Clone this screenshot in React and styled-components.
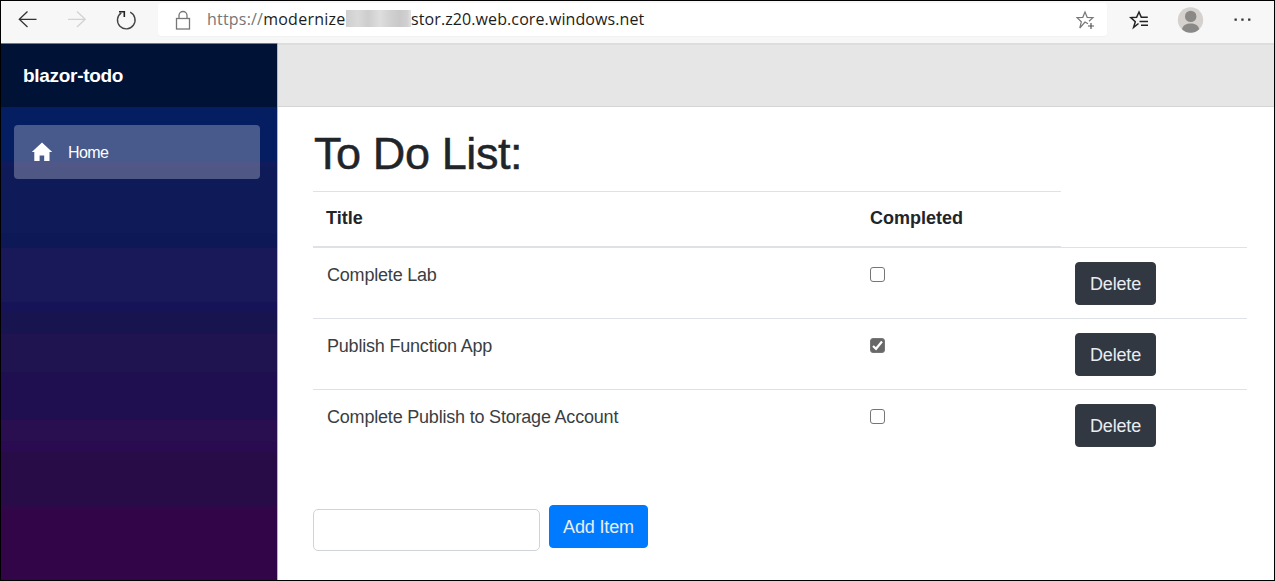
import React from "react";
import styled, { createGlobalStyle } from "styled-components";

const Global = createGlobalStyle`
  * { box-sizing: border-box; }
  body { margin: 0; background: #fff; font-family: "Liberation Sans", Arial, sans-serif; color: #212529; }
  button, input { font-family: inherit; margin: 0; }
`;

const Window = styled.div`
  width: 1275px;
  height: 581px;
  border: 1px solid #000;
  display: flex;
  flex-direction: column;
  overflow: hidden;
`;

const Toolbar = styled.header`
  height: 42px;
  flex: none;
  display: flex;
  align-items: flex-start;
  background: #f7f7f7;
`;

const NavIcons = styled.div`
  width: 157px;
  height: 38px;
  display: flex;
`;

const AddressBar = styled.div`
  width: 949px;
  height: 33px;
  margin-top: 2px;
  padding: 0 12px 0 15px;
  display: flex;
  align-items: center;
  background: #fff;
  border-radius: 3px;
  box-shadow: 0 1px 1px #f0f0f0;
`;

const Url = styled.div`
  display: flex;
  align-items: center;
  flex: 1;
  margin-left: 16px;
  padding-bottom: 1px;
  font: 16px/22px "Open Sans", "Noto Sans", sans-serif;
  white-space: pre;
  color: #1c1c1c;
`;

const Scheme = styled.span`
  color: #767676;
  letter-spacing: 0.2px;
`;

const UrlPart = styled.span`
  letter-spacing: ${(p) => p.$spacing};
`;

const HostStart = styled.span`
  width: 139px;
  flex: none;
`;

const Redacted = styled.span`
  width: 65px;
  height: 17px;
  flex: none;
  margin-top: -1px;
  background: linear-gradient(90deg, #cfcfcf 0%, #d9d9d9 18%, #cdcdcd 34%, #dedede 52%, #d2d2d2 66%, #c9c9c9 82%, #d0d0d0 94%, #e2e2e2 100%);
`;

const Actions = styled.div`
  flex: 1;
  height: 38px;
`;

const Body = styled.div`
  flex: 1;
  display: flex;
`;

const Sidebar = styled.aside`
  width: 277px;
  border-right: 1px solid #b6b4cb;
  background: linear-gradient(
    #051e62 0 119px, #111a5a 119px 124px, #0e1b58 124px 190px, #0d1857 190px 205px,
    #191858 205px 259px, #171358 259px 268px, #171450 268px 291px, #1f1450 291px 329px,
    #200f50 329px 377px, #290e50 377px 398px, #2a0a50 398px 409px, #280c48 409px 462px,
    #2e0848 462px 467px, #310548 467px);
`;

const Brand = styled.div`
  height: 64px;
  padding: 0 0 0 22px;
  display: flex;
  align-items: center;
  background: #001337;
  border-top: 1px solid #6f7890;
  color: #fff;
  font-size: 19px;
  font-weight: 700;
  letter-spacing: -0.3px;
`;

const NavLink = styled.a`
  margin: 18px 17px 0 13px;
  height: 54px;
  padding-left: 17px;
  display: flex;
  align-items: center;
  gap: 15px;
  border-radius: 4px;
  background: rgba(255, 255, 255, 0.27);
  color: #fff;
  font-size: 16px;
  letter-spacing: -0.6px;
`;

const NavText = styled.span`
  padding-top: 2px;
`;

const Main = styled.main`
  flex: 1;
`;

const TopRow = styled.div`
  height: 64px;
  background: #e6e6e6;
  border-top: 2px solid #dddddd;
  border-bottom: 1px solid #d6d5d5;
`;

const Content = styled.div`
  padding: 16px 27px 0 35px;
`;

const Heading = styled.h1`
  margin: 0;
  height: 68px;
  padding: 1px 0 0 1px;
  font-size: 45px;
  line-height: 60px;
  font-weight: 400;
  letter-spacing: -0.4px;
  -webkit-text-stroke: 0.5px #212529;
`;

const Row = styled.div`
  display: grid;
  grid-template-columns: 544px 204px 1fr;
  height: ${(p) => (p.$last ? 70 : 71)}px;
  border-bottom: ${(p) => (p.$last ? "0" : "1px solid #dee2e6")};
`;

const HeadRow = styled(Row)`
  height: 57px;
  border-bottom: 0;
`;

const HeadCell = styled.div`
  border-top: 1px solid #dee2e6;
  border-bottom: 2px solid #dee2e6;
  padding: 14px 13px;
  font-size: 18px;
  line-height: 24px;
  font-weight: 700;
`;

const HeadSpacer = styled.div`
  border-bottom: 1px solid #dee2e6;
`;

const Cell = styled.div`
  padding: 14px 13px 0;
  font-size: 18px;
  line-height: 28px;
  color: #3a3e42;
`;

const ItemTitle = styled(Cell)`
  padding: 13px 13px 0 14px;
  letter-spacing: -0.2px;
`;

const ActionCell = styled(Cell)`
  padding-left: 14px;
`;

const Check = styled.span`
  display: flex;
  margin-top: 5px;
  width: 15px;
  height: 15px;
  border: 1px solid #767676;
  border-radius: 3px;
  background: ${(p) => (p.$on ? "#686868" : "#fff")};
`;

const Button = styled.button`
  height: 43px;
  width: ${(p) => p.$width};
  padding: 1px 0 0;
  display: block;
  border: 1px solid ${(p) => (p.$primary ? "#007bff" : "#343a40")};
  border-radius: 4px;
  background: ${(p) => (p.$primary ? "#007bff" : "#323842")};
  color: #e9edf1;
  font-size: 18px;
  letter-spacing: -0.15px;
  line-height: 27px;
`;

const Form = styled.form`
  display: flex;
  gap: 9px;
  margin-top: 45px;
`;

const Field = styled.input`
  width: 227px;
  height: 42px;
  margin-top: 4px;
  border: 1px solid #ced4da;
  border-radius: 5px;
  background: #fff;
`;

const items = [
  { title: "Complete Lab", done: false },
  { title: "Publish Function App", done: true },
  { title: "Complete Publish to Storage Account", done: false },
];

export default function App() {
  return (
    <Window>
      <Global />
      <Toolbar>
        <NavIcons>
          <svg width="157" height="38" viewBox="1 1 157 38" fill="none" strokeWidth="1.3">
            <path d="M36.5 19.3H19.5M27.5 11.5L19.3 19.3L27.5 27" stroke="#333" />
            <path d="M68 19.3H85M77 11.5L85.2 19.3L77 27" stroke="#d2d2d2" />
            <path d="M130.2 12.2A8.8 8.8 0 1 1 121.3 12.8" stroke="#444" strokeWidth="1.4" />
            <path d="M119 11.7H124.3V17" stroke="#222" strokeWidth="1.6" />
          </svg>
        </NavIcons>
        <AddressBar>
          <svg width="18" height="22" viewBox="173 8 18 22" fill="none" stroke="#777" strokeWidth="1.3">
            <rect x="176.5" y="17.5" width="13" height="10.5" />
            <path d="M179 17.5V14.5A4 4 0 0 1 187 14.5V17.5" />
          </svg>
          <Url>
            <HostStart>
              <Scheme>https://</Scheme>
              <UrlPart $spacing="0.25px">modernize</UrlPart>
            </HostStart>
            <Redacted />
            <UrlPart $spacing="0.1px">stor.z20.web.core.windows.net</UrlPart>
          </Url>
          <svg width="20" height="22" viewBox="1075 9 20 22" fill="none" stroke="#777" strokeWidth="1.2">
            <path d="M1088 23.8L1085 22L1079.8 28L1081.3 21.8L1077 17.6L1082.8 17.3L1085 12L1087.2 17.3L1093 17.6L1089 21.3" />
            <path d="M1091 23V29M1088 26H1094" stroke="#555" />
          </svg>
        </AddressBar>
        <Actions>
          <svg width="167" height="38" viewBox="1107 1 167 38" fill="none">
            <path d="M1138.5 23.5L1133.6 27.4L1135.3 21.7L1130.8 17.6L1136.6 17.3L1139 12L1141.3 17.3H1147.8M1139.5 21.5H1148M1141 25.3H1148" stroke="#222" strokeWidth="1.5" />
            <circle cx="1190.5" cy="20" r="12.7" fill="#d5d1ce" />
            <circle cx="1190.7" cy="16.4" r="5.7" fill="#8b8987" />
            <path d="M1182 29.2C1183 25.2 1186.5 23.6 1190.6 23.6C1194.7 23.6 1198.2 25.2 1199.2 29.2C1196.8 31.7 1193.8 32.7 1190.6 32.7C1187.4 32.7 1184.4 31.7 1182 29.2Z" fill="#8b8987" />
            <path d="M1234.5 18.5h2.3v2.3h-2.3zM1241.3 18.5h2.3v2.3h-2.3zM1248.1 18.5h2.3v2.3h-2.3z" fill="#333" />
          </svg>
        </Actions>
      </Toolbar>
      <Body>
        <Sidebar>
          <Brand>blazor-todo</Brand>
          <NavLink>
            <svg width="22" height="20" viewBox="0 0 22 20" fill="#fff">
              <path d="M11 0.5L0.8 10H3.3V19H8.6V13.5H13.2V19H18.5V10H21.2Z" />
            </svg>
            <NavText>Home</NavText>
          </NavLink>
        </Sidebar>
        <Main>
          <TopRow />
          <Content>
            <Heading>To Do List:</Heading>
            <HeadRow>
              <HeadCell>Title</HeadCell>
              <HeadCell>Completed</HeadCell>
              <HeadSpacer />
            </HeadRow>
            {items.map((item, i) => (
              <Row key={item.title} $last={i === items.length - 1}>
                <ItemTitle>{item.title}</ItemTitle>
                <Cell>
                  <Check $on={item.done}>
                    {item.done && (
                      <svg width="13" height="13" viewBox="0 0 13 13" fill="none" stroke="#fff" strokeWidth="2.2">
                        <path d="M2 7L5 9.8L11 2.5" />
                      </svg>
                    )}
                  </Check>
                </Cell>
                <ActionCell>
                  <Button $width="81px">Delete</Button>
                </ActionCell>
              </Row>
            ))}
            <Form>
              <Field />
              <Button type="button" $primary $width="99px">Add Item</Button>
            </Form>
          </Content>
        </Main>
      </Body>
    </Window>
  );
}
